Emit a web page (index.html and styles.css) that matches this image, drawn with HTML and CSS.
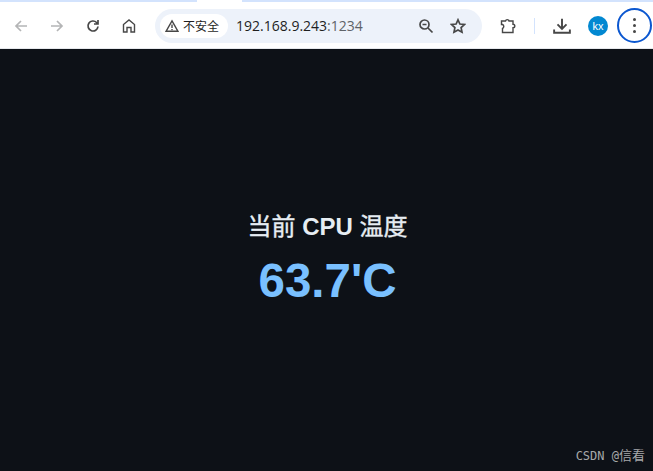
FILE: index.html
```html
<!DOCTYPE html>
<html lang="zh">
<head>
<meta charset="utf-8">
<title>CPU</title>
<link rel="stylesheet" href="styles.css">
</head>
<body>
<div class="tabstrip"><div class="tabline"></div><div class="tabgap"></div><div class="tabline rest"></div></div>
<header class="toolbar">
  <svg class="ic nav" viewBox="0 0 16 16"><path d="M14 8H3M8 3L3 8l5 5" class="st dim"/></svg>
  <svg class="ic nav gap1" viewBox="0 0 16 16"><path d="M2 8h11M8 3l5 5-5 5" class="st dim"/></svg>
  <svg class="ic nav gap2" viewBox="0 0 16 16"><path d="M13 8.500A5 5 0 1 1 11.600 4.500L13 6M13 2v4H9" class="st"/></svg>
  <svg class="ic nav gap2" viewBox="0 0 16 16"><path d="M2.500 14V6.500L8 2l5.500 4.500V14H10V9.500H6V14Z" class="st thin"/></svg>
  <div class="omnibox">
    <div class="chip">
      <svg class="warn" viewBox="0 0 14 14"><path d="M7 1.800L13 12.300H1Z" class="st thin"/><path d="M7 5.500v3.500M7 10v1.200" class="st thin"/></svg>
      <span>不安全</span>
    </div>
    <div class="url">192.168.9.243<span class="port">:1234</span></div>
    <svg class="ic zoomi" viewBox="0 0 16 16"><circle cx="6.500" cy="6.500" r="4.500" class="st"/><path d="M10 10l4.500 4.500M4.500 6.500h4" class="st"/></svg>
    <svg class="ic star" viewBox="0 0 16 16"><path d="M8 1.800l1.900 4.200 4.600.5-3.400 3.100.9 4.600L8 11.900l-4 2.300.9-4.600L1.500 6.500l4.600-.5Z" class="st"/></svg>
  </div>
  <svg class="ic ext" viewBox="0 0 16 16"><path d="M1.500 3H5.500A1.800 1.800 0 0 1 9 3H13V6.200A1.800 1.800 0 0 1 13 9.800V14.500H2.500V10.500A2.200 2.200 0 0 0 2.500 6.500H1.500Z" class="st thin"/></svg>
  <div class="sep"></div>
  <svg class="ic dl" viewBox="0 0 16 16"><path d="M8 1.500V10M4 6.500L8 10.500l4-4M1 11v3h14v-3" class="st"/></svg>
  <div class="avatar">kx</div>
  <div class="menu"><i></i><i></i><i></i></div>
</header>
<main class="page">
  <h1 class="title"><span class="cjk">当前</span> CPU <span class="cjk">温度</span></h1>
  <p class="temp">63.7'C</p>
  <footer class="mark">CSDN @<span class="mark-name">信看</span></footer>
</main>
</body>
</html>
```
FILE: styles.css
```css
* { box-sizing: border-box; }
html, body { margin: 0; height: 100%; }
body {
  display: flex;
  flex-direction: column;
  background: #0d1117;
  font-family: "Liberation Sans", "Noto Sans CJK SC", sans-serif;
  overflow: hidden;
}
.tabstrip { height: 3px; background: #fff; flex: none; display: flex; }
.tabline { height: 2px; width: 197px; background: #d3e3fd; flex: none; }
.tabgap { width: 45px; flex: none; }
.rest { flex: 1; }
.toolbar {
  height: 46px;
  flex: none;
  background: #fff;
  display: flex;
  align-items: center;
  padding-left: 13px;
  border-bottom: 1px solid #e6e8ec;
}
.ic { width: 16px; height: 16px; flex: none; display: block; }
.gap1 { margin-left: 20px; }
.gap2 { margin-left: 20px; }
.st { fill: none; stroke: #474747; stroke-width: 1.700; }
.thin { stroke-width: 1.400; }
.dim { stroke: #b4b5b6; }
.omnibox {
  width: 327px;
  height: 34px;
  margin-left: 18px;
  border-radius: 17px;
  background: #edf2fa;
  display: flex;
  align-items: center;
  padding-left: 5px;
  flex: none;
}
.chip {
  height: 24px;
  width: 68px;
  border-radius: 12px;
  background: #fff;
  display: flex;
  align-items: center;
  gap: 4px;
  padding-left: 5px;
  font-size: 12px;
  color: #1f1f1f;
  flex: none;
}
.warn { width: 14px; height: 14px; flex: none; }
.url {
  margin-left: 8px;
  width: 176px;
  font-family: "Open Sans", "Liberation Sans", sans-serif;
  font-size: 14px;
  color: #1f1f1f;
  flex: none;
}
.port { color: #5f6368; }
.zoomi { margin-left: 6px; }
.star { margin-left: 16px; }
.ext { margin-left: 18px; }
.sep { width: 1px; height: 16px; margin-left: 18px; background: #d3e3fd; flex: none; }
.dl { margin-left: 18px; width: 18px; height: 18px; }
.avatar {
  width: 20px;
  height: 20px;
  margin-left: 17px;
  border-radius: 50%;
  background: #0288d1;
  color: #fff;
  font-size: 11px;
  display: flex;
  align-items: center;
  justify-content: center;
  flex: none;
}
.menu {
  width: 35px;
  height: 35px;
  margin-left: 9px;
  border: 2px solid #0b57d0;
  border-radius: 50%;
  display: flex;
  flex-direction: column;
  align-items: center;
  justify-content: center;
  gap: 3px;
  flex: none;
}
.menu i { width: 3px; height: 3px; border-radius: 50%; background: #474747; display: block; }
.page {
  position: relative;
  flex: 1;
  display: flex;
  flex-direction: column;
  align-items: center;
  padding: 164px 0 0 2px;
  color: #e6edf3;
}
.title {
  margin: 0;
  font-size: 24px;
  line-height: 28px;
  font-weight: 700;
  color: #e6edf3;
}
.cjk { font-weight: 400; -webkit-text-stroke: 0.4px #e6edf3; }
.temp {
  margin: 12px 0 0;
  font-size: 47.500px;
  line-height: 55px;
  font-weight: 700;
  color: #79c0ff;
}
.mark {
  position: absolute;
  right: 8px;
  bottom: 7px;
  font-family: "DejaVu Sans Mono", "Noto Sans CJK SC", monospace;
  font-size: 12px;
  color: #a6a8aa;
}
.mark-name { font-size: 13px; }
```
